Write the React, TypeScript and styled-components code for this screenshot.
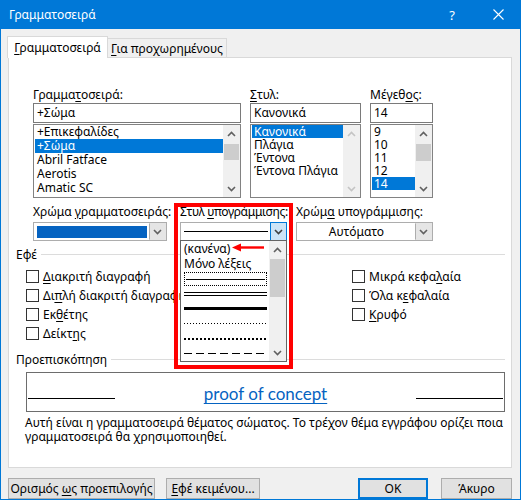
import React from "react";
import styled, { createGlobalStyle } from "styled-components";

const GlobalStyle = createGlobalStyle`
  html, body { margin: 0; padding: 0; background: #f0f0f0; }
  body {
    font-family: "Noto Sans", "Liberation Sans", sans-serif;
    font-size: 12px;
    color: #000;
  }
  * { box-sizing: border-box; }
`;

const fonts = ["+Επικεφαλίδες", "+Σώμα", "Abril Fatface", "Aerotis", "Amatic SC"];
const styles = ["Κανονικά", "Πλάγια", "Έντονα", "Έντονα Πλάγια"];
const sizes = ["9", "10", "11", "12", "14"];

const Chevron: React.FC<{ up?: boolean; color?: string }> = ({ up, color = "#606060" }) => (
  <svg width="9" height="6" viewBox="0 0 9 6">
    <polyline
      points={up ? "1,5 4.5,1.5 8,5" : "1,1 4.5,4.5 8,1"}
      fill="none"
      stroke={color}
      strokeWidth="1.6"
    />
  </svg>
);

const ScrollBar: React.FC<{ thumbTop?: number; thumbHeight?: number; disabled?: boolean }> = ({
  thumbTop,
  thumbHeight,
  disabled,
}) => {
  const c = disabled ? "#c4c4c4" : "#606060";
  return (
    <Scroll>
      <ScrollArrow>
        <Chevron up color={c} />
      </ScrollArrow>
      <Track>{thumbHeight ? <Thumb style={{ marginTop: thumbTop, height: thumbHeight }} /> : null}</Track>
      <ScrollArrow>
        <Chevron color={c} />
      </ScrollArrow>
    </Scroll>
  );
};

const App: React.FC = () => {
  return (
    <>
      <GlobalStyle />
      <Window>
        <TitleBar>
          <Title>Γραμματοσειρά</Title>
          <TitleButtons>
            <TitleButton>?</TitleButton>
            <TitleButton>
              <svg width="11" height="11" viewBox="0 0 11 11">
                <path d="M0.5 0.5 L10.5 10.5 M10.5 0.5 L0.5 10.5" stroke="#fff" strokeWidth="1.1" />
              </svg>
            </TitleButton>
          </TitleButtons>
        </TitleBar>

        <Body>
          <TabStrip>
            <Tab $active>
              <span>
                <U>Γ</U>ραμματοσειρά
              </span>
            </Tab>
            <Tab>
              <span>
                <U>Γ</U>ια προχωρημένους
              </span>
            </Tab>
          </TabStrip>

          <Panel>
            <FieldRow $top={29}>
              <Field $width={208} $after={9}>
                <FieldLabel>
                  Γραμμα<U>τ</U>οσειρά:
                </FieldLabel>
                <TextInput>+Σώμα</TextInput>
                <ListBox>
                  <ListItems>
                    {fonts.map((f, i) => (
                      <ListItem key={f} $h={14} $selected={i === 1}>
                        {f}
                      </ListItem>
                    ))}
                  </ListItems>
                  <ScrollBar thumbTop={2} thumbHeight={16} />
                </ListBox>
              </Field>
              <Field $width={111} $after={9}>
                <FieldLabel>
                  <U>Σ</U>τυλ:
                </FieldLabel>
                <TextInput>Κανονικά</TextInput>
                <ListBox>
                  <ListItems>
                    {styles.map((s, i) => (
                      <ListItem key={s} $h={13} $selected={i === 0}>
                        {s}
                      </ListItem>
                    ))}
                  </ListItems>
                  <ScrollBar disabled />
                </ListBox>
              </Field>
              <Field $width={63}>
                <FieldLabel>
                  Μέγεθ<U>ο</U>ς:
                </FieldLabel>
                <TextInput>14</TextInput>
                <ListBox>
                  <ListItems>
                    {sizes.map((s, i) => (
                      <ListItem key={s} $h={13} $selected={i === 4}>
                        {s}
                      </ListItem>
                    ))}
                  </ListItems>
                  <ScrollBar thumbTop={2} thumbHeight={17} />
                </ListBox>
              </Field>
            </FieldRow>

            <FieldRow $top={6}>
              <Field $width={134} $after={13}>
                <FieldLabel>
                  Χρώμα <U>γ</U>ραμματοσειράς:
                </FieldLabel>
                <Combo>
                  <ComboValue>
                    <Swatch />
                  </ComboValue>
                  <ComboButton>
                    <Chevron />
                  </ComboButton>
                </Combo>
              </Field>

              <Field $width={107} $after={9} $overlay>
                <FieldLabel $tight>
                  Στυλ <U>υ</U>πογράμμισης:
                </FieldLabel>
                <Combo>
                  <ComboValue>
                    <SampleLine $kind="single" />
                  </ComboValue>
                  <ComboButton $focused>
                    <Chevron color="#404040" />
                  </ComboButton>
                </Combo>
                <DropList>
                  <ListItems>
                    <DropItem>(κανένα)</DropItem>
                    <DropItem>Μόνο λέξεις</DropItem>
                    <DropItem>
                      <FocusFrame>
                        <SampleLine $kind="single" />
                      </FocusFrame>
                    </DropItem>
                    <DropItem>
                      <SampleLine $kind="double" />
                    </DropItem>
                    <DropItem>
                      <SampleLine $kind="thick" />
                    </DropItem>
                    <DropItem>
                      <SampleLine $kind="dotted" />
                    </DropItem>
                    <DropItem>
                      <SampleLine $kind="heavyDotted" />
                    </DropItem>
                    <DropItem>
                      <SampleLine $kind="dashed" />
                    </DropItem>
                  </ListItems>
                  <ScrollBar thumbTop={1} thumbHeight={38} />
                </DropList>
                <RedFrame />
                <RedArrow width="32" height="9" viewBox="0 0 32 9">
                  <polygon points="0,4.5 9,0.5 9,8.5" fill="#ff0000" />
                  <rect x="8" y="3.3" width="24" height="2.4" fill="#ff0000" />
                </RedArrow>
              </Field>

              <Field $width={137}>
                <FieldLabel>
                  Χρώμ<U>α</U> υπογράμμισης:
                </FieldLabel>
                <Combo>
                  <ComboValue $center>Αυτόματο</ComboValue>
                  <ComboButton>
                    <Chevron />
                  </ComboButton>
                </Combo>
              </Field>
            </FieldRow>

            <GroupHeader $top={5}>
              <span>Εφέ</span>
              <GroupLine />
            </GroupHeader>
            <CheckArea>
              <CheckColumn $width={326}>
                <CheckRow>
                  <CheckBox />
                  <span>
                    <U>Δ</U>ιακριτή διαγραφή
                  </span>
                </CheckRow>
                <CheckRow>
                  <CheckBox />
                  <span>
                    Δι<U>π</U>λή διακριτή διαγραφή
                  </span>
                </CheckRow>
                <CheckRow>
                  <CheckBox />
                  <span>
                    Εκ<U>θ</U>έτης
                  </span>
                </CheckRow>
                <CheckRow>
                  <CheckBox />
                  <span>
                    Δείκτ<U>η</U>ς
                  </span>
                </CheckRow>
              </CheckColumn>
              <CheckColumn>
                <CheckRow>
                  <CheckBox />
                  <span>
                    Μικρά κεφα<U>λ</U>αία
                  </span>
                </CheckRow>
                <CheckRow>
                  <CheckBox />
                  <span>
                    Όλα κ<U>ε</U>φαλαία
                  </span>
                </CheckRow>
                <CheckRow>
                  <CheckBox />
                  <span>
                    <U>Κ</U>ρυφό
                  </span>
                </CheckRow>
              </CheckColumn>
            </CheckArea>

            <GroupHeader $top={8}>
              <span>Προεπισκόπηση</span>
              <GroupLine />
            </GroupHeader>
            <PreviewBox>
              <MarginLine />
              <PreviewText>proof of concept</PreviewText>
              <MarginLine />
            </PreviewBox>
            <Description>
              Αυτή είναι η γραμματοσειρά θέματος σώματος. Το τρέχον θέμα εγγράφου ορίζει ποια
              <br />
              γραμματοσειρά θα χρησιμοποιηθεί.
            </Description>
          </Panel>

          <ButtonBar>
            <Button $width={147}>
              <span>
                Ορισμός <U>ω</U>ς προεπιλογής
              </span>
            </Button>
            <Button $width={94} $gap={11}>
              <span>
                <U>Ε</U>φέ κειμένου...
              </span>
            </Button>
            <Spacer />
            <Button $width={70} $default>
              <span>OK</span>
            </Button>
            <Button $width={71} $gap={13}>
              <span>Άκυρο</span>
            </Button>
          </ButtonBar>
        </Body>
      </Window>
    </>
  );
};

export default App;

const Window = styled.div`
  width: 521px;
  height: 500px;
  background: #f0f0f0;
  border: 1px solid #0078d7;
  border-top: none;
  display: flex;
  flex-direction: column;
  overflow: hidden;
`;

const TitleBar = styled.div`
  height: 29px;
  flex: none;
  background: #0078d7;
  color: #fff;
  display: flex;
  align-items: center;
  justify-content: space-between;
  padding-left: 9px;
  margin: 0 -1px;
`;

const Title = styled.div`
  font-size: 12px;
`;

const TitleButtons = styled.div`
  display: flex;
  height: 100%;
`;

const TitleButton = styled.div`
  width: 46px;
  height: 100%;
  display: flex;
  align-items: center;
  justify-content: center;
  font-size: 13px;
`;

const Body = styled.div`
  flex: 1;
  display: flex;
  flex-direction: column;
  padding: 7px 8px 0 7px;
`;

const U = styled.span`
  text-decoration: underline;
  text-underline-offset: 2px;
`;

const TabStrip = styled.div`
  display: flex;
  align-items: flex-end;
  height: 22px;
  margin-bottom: -1px;
  position: relative;
  z-index: 1;
`;

const Tab = styled.div<{ $active?: boolean }>`
  display: flex;
  align-items: center;
  justify-content: center;
  border: 1px solid #d9d9d9;
  background: ${(p) => (p.$active ? "#fff" : "#f0f0f0")};
  height: ${(p) => (p.$active ? "22px" : "20px")};
  width: ${(p) => (p.$active ? "101px" : "119px")};
  margin-left: ${(p) => (p.$active ? "-1px" : "0")};
  border-bottom: ${(p) => (p.$active ? "none" : "1px solid #d9d9d9")};
  border-left: ${(p) => (p.$active ? "1px solid #d9d9d9" : "none")};
  padding-top: ${(p) => (p.$active ? "0" : "1px")};
  white-space: nowrap;
`;

const Panel = styled.div`
  height: 411px;
  flex: none;
  background: #fff;
  border: 1px solid #d9d9d9;
  display: flex;
  flex-direction: column;
`;

const FieldRow = styled.div<{ $top: number }>`
  display: flex;
  margin-top: ${(p) => p.$top}px;
  padding-left: 24px;
`;

const Field = styled.div<{ $width: number; $after?: number; $overlay?: boolean }>`
  width: ${(p) => p.$width}px;
  margin-right: ${(p) => p.$after ?? 0}px;
  display: flex;
  flex-direction: column;
  position: ${(p) => (p.$overlay ? "relative" : "static")};
  z-index: ${(p) => (p.$overlay ? 2 : "auto")};
`;

const FieldLabel = styled.div<{ $tight?: boolean }>`
  height: 16px;
  line-height: 16px;
  white-space: nowrap;
  letter-spacing: ${(p) => (p.$tight ? "-0.35px" : "normal")};
`;

const TextInput = styled.div`
  height: 20px;
  border: 1px solid #7a7a7a;
  line-height: 18px;
  padding: 0 3px;
  background: #fff;
`;

const ListBox = styled.div`
  margin-top: 1px;
  height: 74px;
  border: 1px solid #828282;
  background: #fff;
  display: flex;
`;

const ListItems = styled.div`
  flex: 1;
  min-width: 0;
  display: flex;
  flex-direction: column;
  padding-left: 1px;
`;

const ListItem = styled.div<{ $h: number; $selected?: boolean }>`
  height: ${(p) => p.$h}px;
  line-height: ${(p) => p.$h}px;
  padding-left: 2px;
  white-space: nowrap;
  background: ${(p) => (p.$selected ? "#0078d7" : "transparent")};
  color: ${(p) => (p.$selected ? "#fff" : "#000")};
`;

const Scroll = styled.div`
  width: 17px;
  flex: none;
  background: #f0f0f0;
  display: flex;
  flex-direction: column;
`;

const ScrollArrow = styled.div`
  height: 17px;
  flex: none;
  display: flex;
  align-items: center;
  justify-content: center;
`;

const Track = styled.div`
  flex: 1;
  display: flex;
  flex-direction: column;
  align-items: stretch;
  padding: 0 1px;
`;

const Thumb = styled.div`
  background: #cdcdcd;
`;

const Combo = styled.div`
  margin-top: 2px;
  height: 19px;
  border: 1px solid #adadad;
  background: #fff;
  display: flex;
`;

const ComboValue = styled.div<{ $center?: boolean }>`
  flex: 1;
  display: flex;
  align-items: center;
  justify-content: ${(p) => (p.$center ? "center" : "flex-start")};
  padding: 2px 2px 2px 3px;
`;

const Swatch = styled.div`
  width: 100%;
  height: 12px;
  background: #0563c1;
`;

const ComboButton = styled.div<{ $focused?: boolean }>`
  width: 17px;
  flex: none;
  display: flex;
  align-items: center;
  justify-content: center;
  margin: ${(p) => (p.$focused ? "-1px -1px -1px 0" : "0")};
  background: ${(p) => (p.$focused ? "#cce4f7" : "#e5e5e5")};
  border: 1px solid ${(p) => (p.$focused ? "#0078d7" : "transparent")};
  border-left: 1px solid ${(p) => (p.$focused ? "#0078d7" : "#adadad")};
`;

const SampleLine = styled.div<{ $kind: "single" | "double" | "thick" | "dotted" | "heavyDotted" | "dashed" }>`
  width: 100%;
  ${(p) => {
    switch (p.$kind) {
      case "double":
        return "height: 4px; border-top: 1px solid #000; border-bottom: 1px solid #000;";
      case "thick":
        return "height: 3px; background: #000;";
      case "dotted":
        return "height: 1px; background: repeating-linear-gradient(90deg, #000 0 1px, transparent 1px 3px);";
      case "heavyDotted":
        return "height: 2px; background: repeating-linear-gradient(90deg, #000 0 2px, transparent 2px 4px);";
      case "dashed":
        return "height: 1px; background: repeating-linear-gradient(90deg, #000 0 8px, transparent 8px 12px);";
      default:
        return "height: 1px; background: #000;";
    }
  }}
`;

const DropList = styled.div`
  position: absolute;
  left: 0;
  top: 36px;
  width: 107px;
  height: 122px;
  border: 1px solid #646464;
  background: #fff;
  display: flex;
`;

const DropItem = styled.div`
  height: 15px;
  flex: none;
  display: flex;
  align-items: center;
  padding: 0 2px;
  white-space: nowrap;
  color: #000;
`;

const FocusFrame = styled.div`
  width: 100%;
  height: 14px;
  margin-top: 1px;
  border: 1px dotted #000;
  display: flex;
  align-items: center;
  padding: 0 1px;
`;

const RedFrame = styled.div`
  position: absolute;
  left: -6px;
  top: -1px;
  width: 119px;
  height: 166px;
  border: 4px solid #ff0000;
  pointer-events: none;
`;

const RedArrow = styled.svg`
  position: absolute;
  left: 52px;
  top: 39px;
`;

const GroupHeader = styled.div<{ $top: number }>`
  margin-top: ${(p) => p.$top}px;
  height: 16px;
  display: flex;
  align-items: center;
  padding: 0 6px 0 7px;
  white-space: nowrap;
`;

const GroupLine = styled.div`
  flex: 1;
  height: 1px;
  background: #dcdcdc;
  margin-left: 4px;
`;

const CheckArea = styled.div`
  display: flex;
  margin-top: 5px;
  padding-left: 17px;
`;

const CheckColumn = styled.div<{ $width?: number }>`
  width: ${(p) => (p.$width ? `${p.$width}px` : "auto")};
  display: flex;
  flex-direction: column;
`;

const CheckRow = styled.div`
  height: 19px;
  display: flex;
  align-items: center;
  gap: 4px;
  white-space: nowrap;
`;

const CheckBox = styled.div`
  width: 13px;
  height: 13px;
  border: 1px solid #333;
  background: #fff;
  flex: none;
`;

const PreviewBox = styled.div`
  margin: 5px 6px 0 17px;
  height: 40px;
  border: 1px solid #6d6d6d;
  display: flex;
  align-items: flex-end;
  justify-content: space-between;
  padding: 0 1px 12px 1px;
`;

const MarginLine = styled.div`
  width: 87px;
  height: 1px;
  background: #000;
`;

const PreviewText = styled.div`
  font-family: "Lato", "Open Sans", sans-serif;
  font-size: 17px;
  line-height: 17px;
  color: #0563c1;
  text-decoration: underline;
  text-underline-offset: 3px;
  margin-bottom: -3px;
`;

const Description = styled.div`
  margin: 4px 0 0 16px;
  line-height: 14px;
  white-space: nowrap;
`;

const ButtonBar = styled.div`
  display: flex;
  padding-top: 10px;
`;

const Spacer = styled.div`
  flex: 1;
`;

const Button = styled.div<{ $width: number; $default?: boolean; $gap?: number }>`
  width: ${(p) => p.$width}px;
  margin-left: ${(p) => p.$gap ?? 0}px;
  height: 21px;
  display: flex;
  align-items: center;
  justify-content: center;
  background: #e1e1e1;
  border: ${(p) => (p.$default ? "2px solid #0078d7" : "1px solid #adadad")};
  white-space: nowrap;
`;
